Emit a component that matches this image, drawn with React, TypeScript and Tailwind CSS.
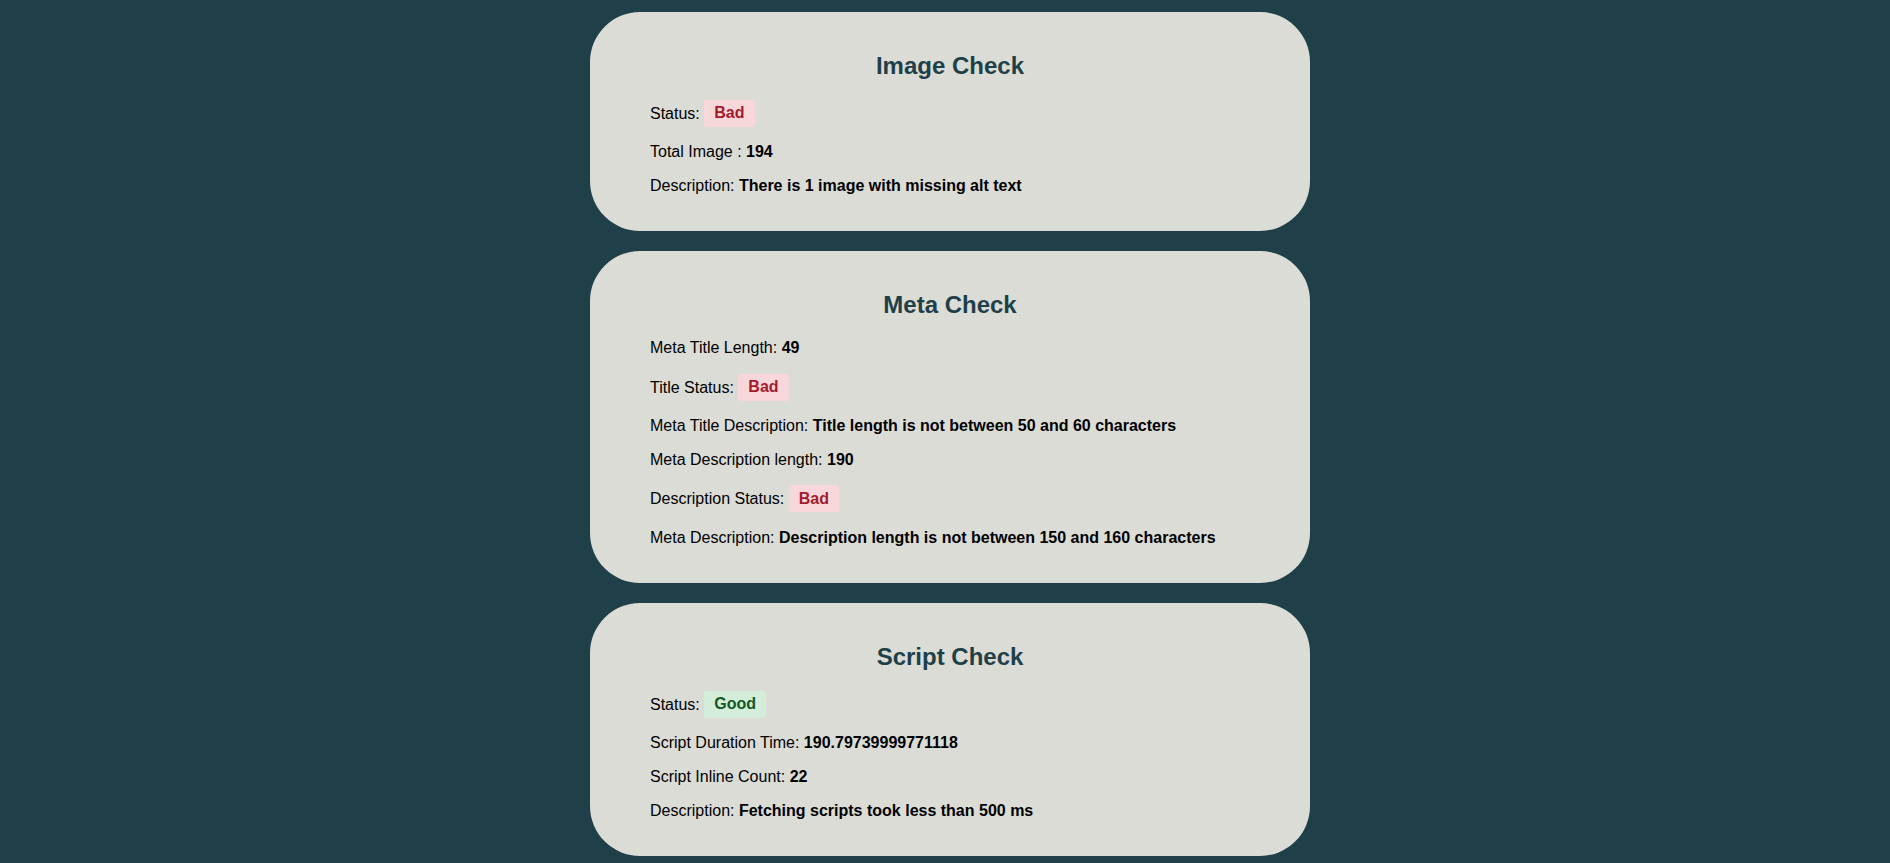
import React from "react";

type Row = { label: string; value?: string; badge?: "Bad" | "Good" };

const Badge = ({ kind }: { kind: "Bad" | "Good" }) =>
  kind === "Bad" ? (
    <span className="inline-block rounded-[3px] bg-[#f8d7da] px-[10px] py-[4.5px] font-bold text-[#a31c2e]">Bad</span>
  ) : (
    <span className="inline-block rounded-[3px] bg-[#d4edda] px-[10px] py-[4.5px] font-bold text-[#155724]">Good</span>
  );

const Card = ({ title, rows }: { title: string; rows: Row[] }) => (
  <div className="flex w-[720px] flex-col rounded-[50px] bg-[#dbdcd6] px-[60px] py-[20px]">
    <h2 className="my-[19.92px] text-center text-[24px] font-bold leading-[normal] text-[#1f3f49]">{title}</h2>
    <div className="mb-[16px] flex flex-col gap-[16.3px] text-[16px] leading-[normal] text-black">
      {rows.map((r, i) => (
        <div key={i}>
          {r.label}{" "}
          {r.badge ? <Badge kind={r.badge} /> : <b className="font-bold">{r.value}</b>}
        </div>
      ))}
    </div>
  </div>
);

export default function App() {
  return (
    <div
      className="flex min-h-[863px] w-full flex-col items-center gap-[20px] bg-[#1f3f49] pl-[10px] pt-[12px] pb-[20px] leading-[normal]"
      style={{ fontFamily: '"Liberation Sans", Arial, sans-serif' }}
    >
      <Card
        title="Image Check"
        rows={[
          { label: "Status:", badge: "Bad" },
          { label: "Total Image :", value: "194" },
          { label: "Description:", value: "There is 1 image with missing alt text" },
        ]}
      />
      <Card
        title="Meta Check"
        rows={[
          { label: "Meta Title Length:", value: "49" },
          { label: "Title Status:", badge: "Bad" },
          { label: "Meta Title Description:", value: "Title length is not between 50 and 60 characters" },
          { label: "Meta Description length:", value: "190" },
          { label: "Description Status:", badge: "Bad" },
          { label: "Meta Description:", value: "Description length is not between 150 and 160 characters" },
        ]}
      />
      <Card
        title="Script Check"
        rows={[
          { label: "Status:", badge: "Good" },
          { label: "Script Duration Time:", value: "190.79739999771118" },
          { label: "Script Inline Count:", value: "22" },
          { label: "Description:", value: "Fetching scripts took less than 500 ms" },
        ]}
      />
    </div>
  );
}
